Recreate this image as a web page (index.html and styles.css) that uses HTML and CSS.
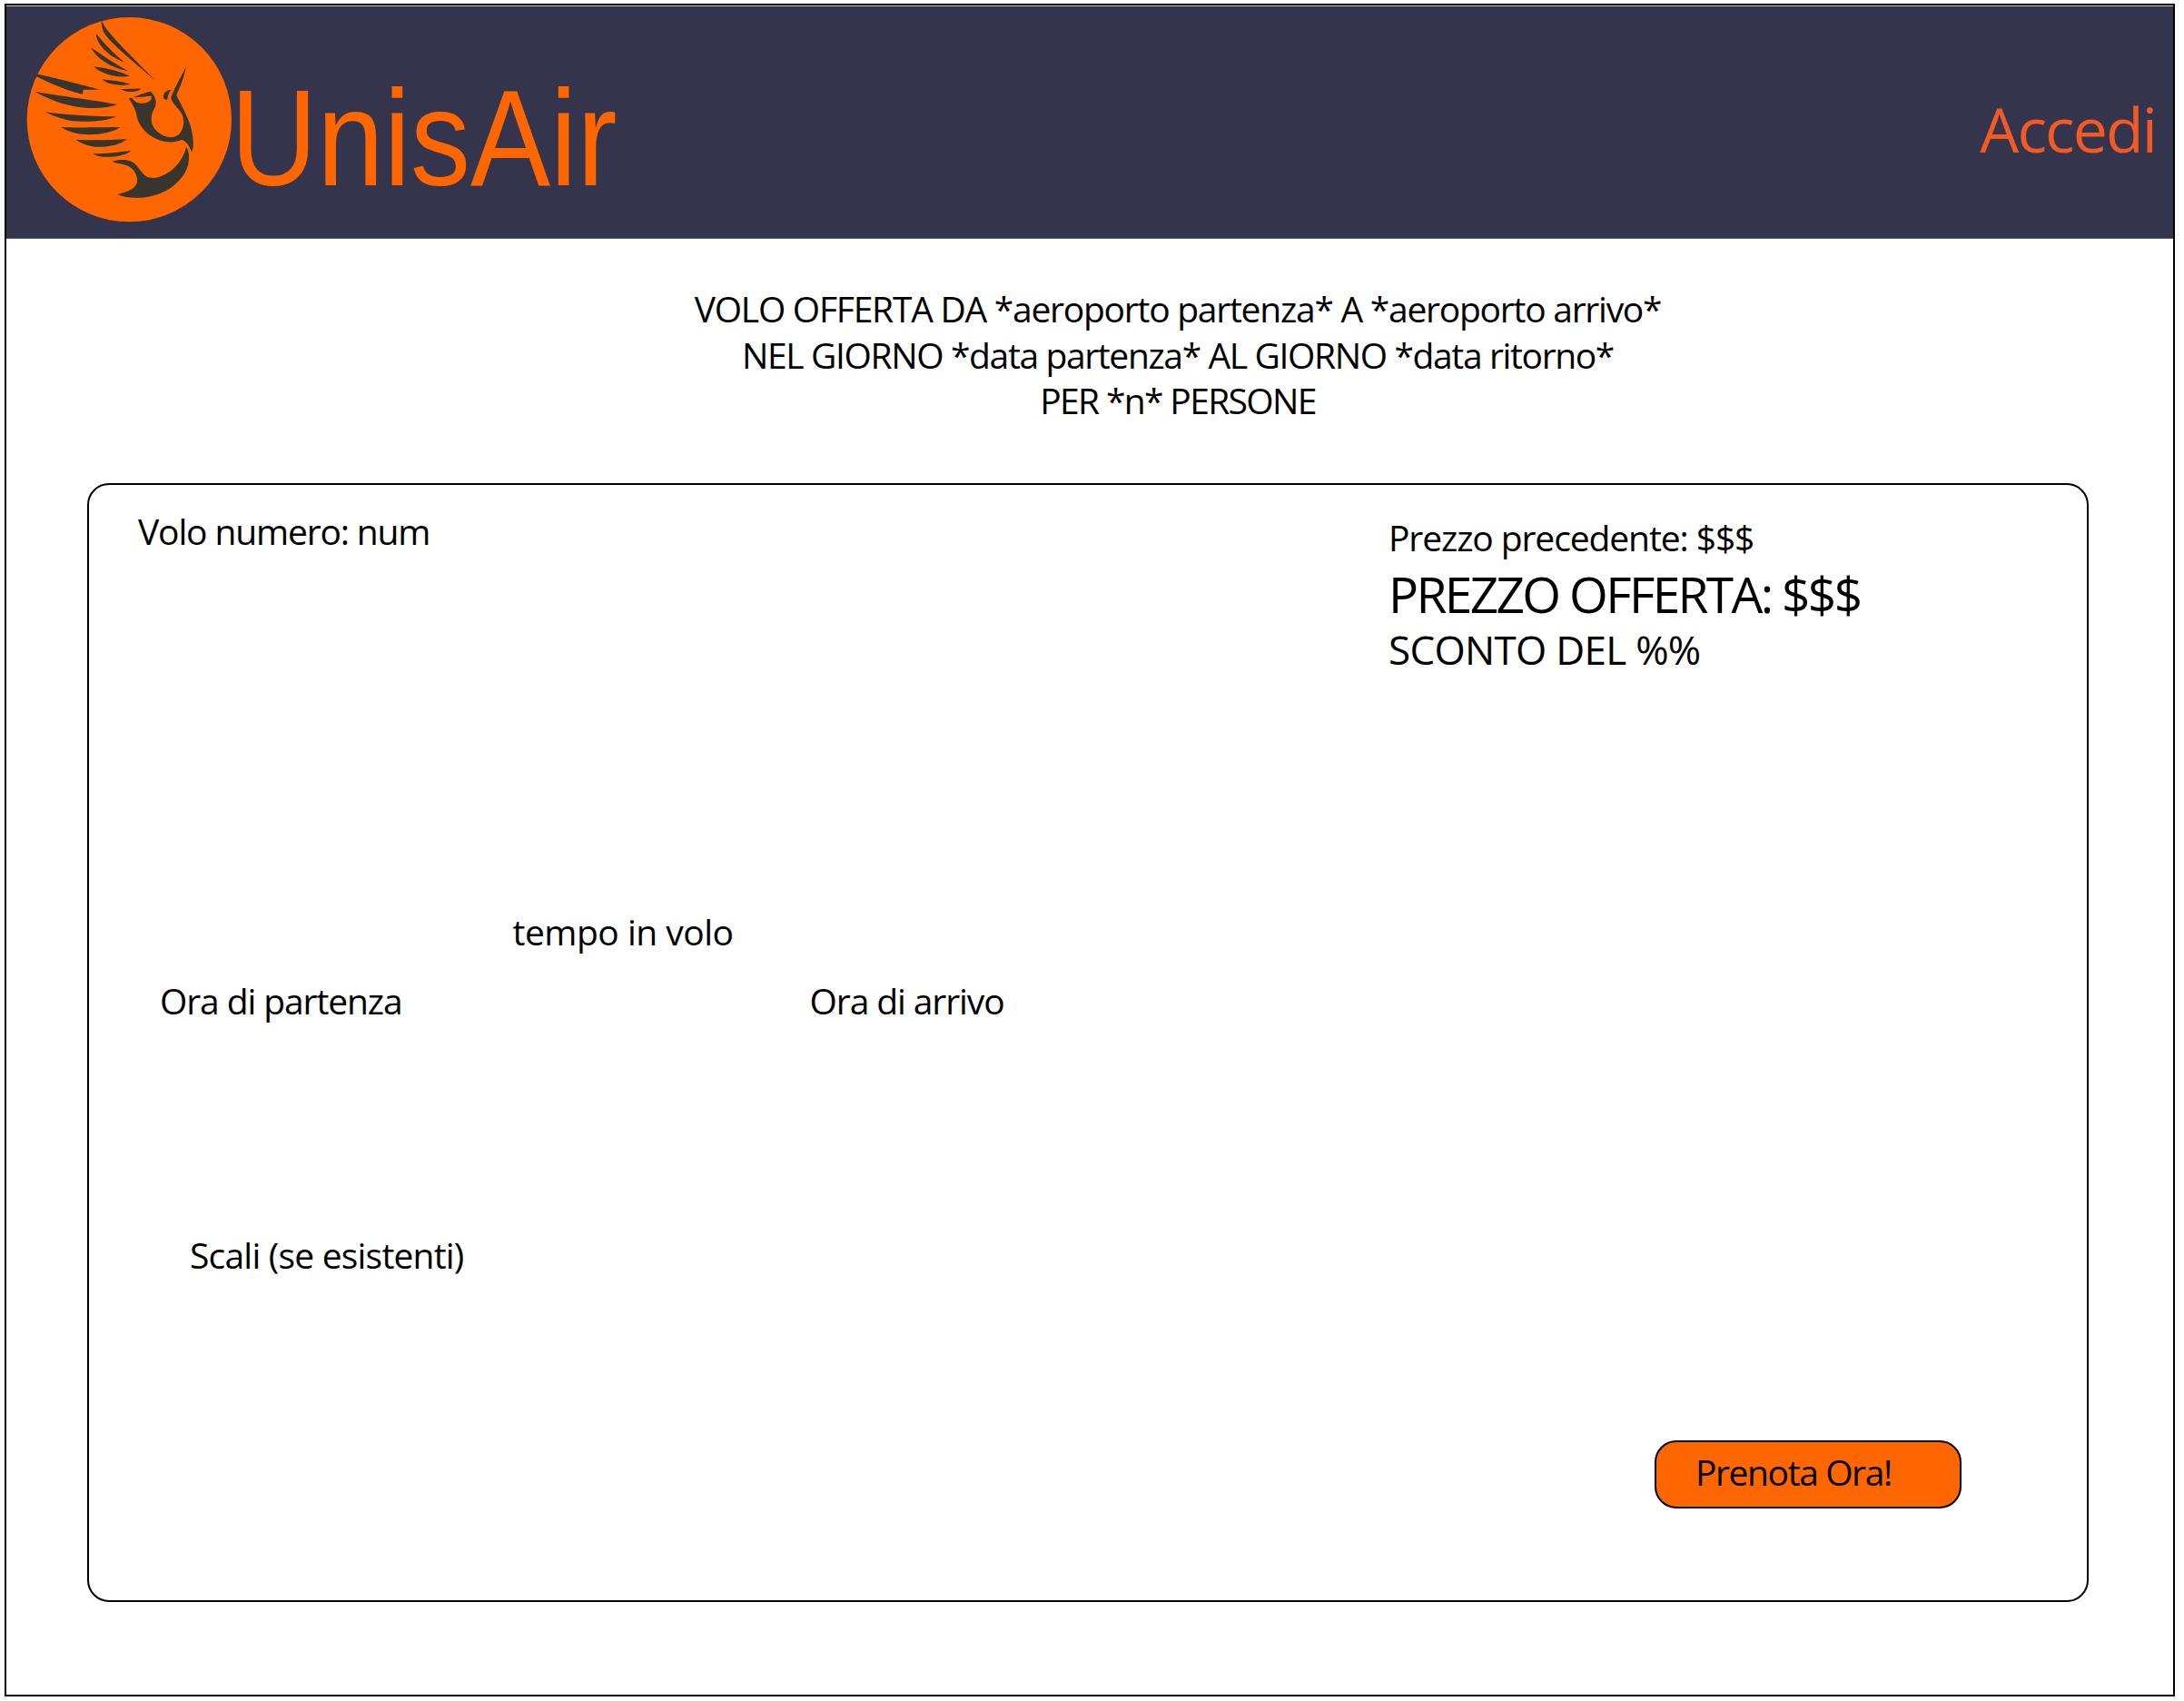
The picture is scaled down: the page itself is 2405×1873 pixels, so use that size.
FILE: index.html
```html
<!DOCTYPE html>
<html lang="en">
<head>
    <meta charset="UTF-8">
    <meta name="viewport" content="width=device-width, initial-scale=1.0">
    <title>UnisAir - Volo offerta</title>
    <link rel="stylesheet" href="styles.css">
</head>
<body>
    <div class="frame">
        <div class="header">
            <div class="brand">
                <svg class="logo" viewBox="0 0 780 750">
                    <circle cx="397" cy="365" r="338" fill="#ff6600"/>
                    <g fill="#38352f">
                        <path d="M305 35C315 70 380 130 485 237C430 190 330 110 312 75C306 60 305 45 305 35Z"/>
                        <path d="M287 80C310 110 345 145 380 175C340 160 290 125 287 80Z"/>
                        <path d="M270 127C310 155 350 180 393 205C340 195 290 165 270 127Z"/>
                        <path d="M280 190C320 195 365 205 400 222C355 228 305 215 280 190Z"/>
                        <path d="M307 232C340 235 375 240 402 248C370 255 325 250 307 232Z"/>
                        <path d="M367 263C390 265 415 262 437 263C420 275 390 278 367 263Z"/>
                        <path d="M62 208C120 220 220 245 300 266L245 266L243 282C190 270 110 235 62 208Z"/>
                        <path d="M85 272C150 285 280 300 358 315C320 330 260 330 210 320C160 310 115 290 85 272Z"/>
                        <path d="M118 340C190 350 280 355 354 355C320 372 250 375 200 368C170 362 140 350 118 340Z"/>
                        <path d="M170 390C230 393 310 390 368 390C340 410 280 418 240 413C210 410 190 400 170 390Z"/>
                        <path d="M220 431C280 435 340 432 390 430C365 450 320 458 285 455C260 452 235 442 220 431Z"/>
                        <path d="M277 478C320 478 365 472 403 468C385 485 340 490 310 488C295 487 285 483 277 478Z"/>
                        <path d="M395 295C420 290 445 275 468 272C480 285 490 300 482 325C465 350 465 385 490 405C515 425 540 430 560 415C580 395 580 365 570 345C555 320 535 310 535 290C550 255 570 220 585 190C575 240 560 265 553 285C570 320 600 370 605 410C610 440 610 460 603 472C595 450 585 435 570 432C540 445 500 440 470 420C440 400 425 375 420 345C415 325 405 310 395 295Z"/>
                        <path d="M510 285C515 270 530 265 535 268C525 280 525 290 522 300C512 300 508 292 510 285Z"/>
                        <path d="M340 503C370 495 400 495 420 515C440 540 450 560 480 558C530 550 575 505 585 455C595 470 598 490 590 520C575 565 530 605 470 618C430 627 385 625 358 612C385 605 415 595 422 575C428 550 410 525 390 517C370 510 355 510 340 503Z"/>
                    </g>
                    <path d="M405 290C430 295 460 285 470 288C475 305 450 315 425 310C415 305 408 298 405 290Z" fill="#ff6600"/>
                </svg>
                <span class="brand-name">UnisAir</span>
            </div>
            <a class="login">Accedi</a>
        </div>

        <div class="search-info">
            <p>VOLO OFFERTA DA *aeroporto partenza* A *aeroporto arrivo*</p>
            <p class="dates">NEL GIORNO *data partenza* AL GIORNO *data ritorno*</p>
            <p class="people">PER *n* PERSONE</p>
        </div>

        <div class="card">
            <div class="flight">
                <p class="flight-number">Volo numero: num</p>
                <div class="times">
                    <span class="departure">Ora di partenza</span>
                    <span class="duration">tempo in volo</span>
                    <span class="arrival">Ora di arrivo</span>
                </div>
                <p class="stops">Scali (se esistenti)</p>
            </div>
            <div class="offer">
                <p class="old-price">Prezzo precedente: $$$</p>
                <p class="new-price">PREZZO OFFERTA: $$$</p>
                <p class="discount">SCONTO DEL %%</p>
                <button class="book">Prenota Ora!</button>
            </div>
        </div>
    </div>
</body>
</html>
```

FILE: styles.css
```css
body {
    margin: 0;
    background: #fff;
    font-family: "Open Sans", Arial, sans-serif;
    color: #000;
}
p {
    margin: 0;
}
.frame {
    width: 2390px;
    height: 1864px;
    margin: 4px 0 0 5px;
    border: 2px solid #000;
    box-sizing: border-box;
    overflow: hidden;
}
.header {
    height: 257px;
    background: #35344d;
    border-top: 1px solid #c8c8c8;
    border-bottom: 1px solid #5c5b70;
    display: flex;
    justify-content: space-between;
    padding: 3px 19px 0 3px;
    box-sizing: border-box;
}
.brand {
    display: flex;
}
.logo {
    width: 260px;
    height: 250px;
    flex: none;
}
.brand-name {
    font-family: "Liberation Sans", Arial, sans-serif;
    font-size: 150px;
    line-height: 172px;
    color: #ff6600;
    margin: 56px 0 0 -16px;
    transform: scaleX(0.88);
    transform-origin: left top;
}
.login {
    font-size: 68px;
    line-height: 90px;
    letter-spacing: -1.9px;
    color: #f15a24;
    margin-top: 87px;
}
.search-info {
    margin: 52px 0 0 0;
    padding-left: 194px;
    text-align: center;
    font-size: 39px;
    line-height: 50.5px;
    letter-spacing: -1.25px;
}
.dates {
    letter-spacing: -1.37px;
}
.people {
    letter-spacing: -1.65px;
}
.card {
    width: 2204px;
    height: 1232px;
    margin: 65px 0 0 89px;
    border: 2px solid #000;
    border-radius: 24px;
    box-sizing: border-box;
    display: flex;
}
.flight {
    width: 1431px;
    font-size: 39px;
    line-height: 52px;
    letter-spacing: -1.15px;
}
.flight-number {
    margin: 25px 0 0 54px;
}
.times {
    display: flex;
    align-items: flex-end;
    margin: 389px 0 0 78px;
}
.departure {
    letter-spacing: -1.1px;
}
.duration {
    margin: 0 0 76px 122px;
    letter-spacing: -0.5px;
}
.arrival {
    margin-left: 84px;
    letter-spacing: -1.1px;
}
.stops {
    margin: 228px 0 0 111px;
    letter-spacing: -0.8px;
}
.offer {
    flex: 1;
    display: flex;
    flex-direction: column;
    align-items: flex-start;
    font-size: 39px;
    letter-spacing: -1.1px;
}
.old-price {
    line-height: 52px;
    margin-top: 32px;
}
.new-price {
    font-size: 55px;
    line-height: 72px;
    letter-spacing: -2.65px;
}
.discount {
    font-size: 44px;
    line-height: 51px;
    letter-spacing: -0.7px;
}
.book {
    width: 338px;
    height: 75px;
    margin: 845px 0 0 293px;
    padding: 0 0 5px 43px;
    background: #ff6600;
    border: 2px solid #000;
    border-radius: 24px;
    font-family: inherit;
    font-size: 39px;
    letter-spacing: -1.4px;
    text-align: left;
    color: #000;
}
```
